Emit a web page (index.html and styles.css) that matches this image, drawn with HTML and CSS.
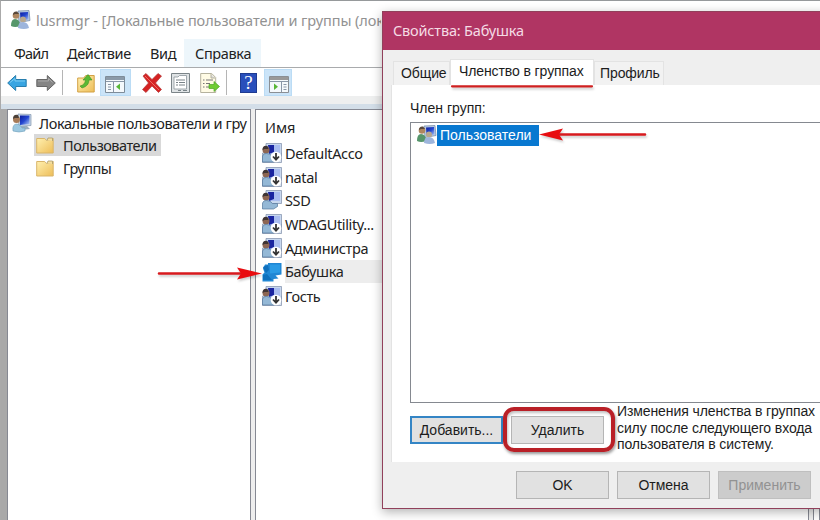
FILE: index.html
```html
<!DOCTYPE html>
<html lang="ru">
<head>
    <meta charset="UTF-8">
    <title>lusrmgr</title>
    <link rel="stylesheet" href="styles.css">
</head>
<body>
    <!-- shared icons -->
    <svg class="defs" width="0" height="0">
        <defs>
            <linearGradient id="gold" x1="0" y1="0" x2="1" y2="1"><stop offset="0" stop-color="#fff0b0"/><stop offset="1" stop-color="#edbd58"/></linearGradient>
            <linearGradient id="screen" x1="0" y1="0" x2="1" y2="1"><stop offset="0" stop-color="#0c1c9c"/><stop offset=".5" stop-color="#2447d0"/><stop offset="1" stop-color="#b8d0f5"/></linearGradient>
        </defs>
        <symbol id="pc" viewBox="0 0 20 20">
            <path d="M6 1l13 0.500v11l-12 1z" fill="#c5d5e8" stroke="#8295ad" stroke-width=".7"/>
            <path d="M8 2.500l9.500 0v8.500l-9.500 1z" fill="url(#screen)"/>
            <path d="M9 13h6l3 3-8 1z" fill="#9baebd"/>
            <circle cx="4.500" cy="6.500" r="3.500" fill="#a77b58"/>
            <path d="M1 6q0-5 5-4l1 3-4 0z" fill="#4b4038"/>
            <path d="M1 18q-1-7 4-7 3 0 5 4l3 0v3q-6 2-12 0z" fill="#9cc8e0" stroke="#6f9fba" stroke-width=".6"/>
        </symbol>
        <symbol id="group" viewBox="0 0 20 20">
            <path d="M7 1l11-.5 1 10-11 2z" fill="#b9cbe4" stroke="#7086a5" stroke-width=".7"/>
            <path d="M9 2.500l8-.5.5 7.500-8 1z" fill="url(#screen)"/>
            <circle cx="5" cy="5.500" r="3.300" fill="#ae865f"/>
            <path d="M2 5q0-4 4-3.500l2 2.500-4 0z" fill="#58483b"/>
            <path d="M0 16q0-7 4-7 5 0 5 7-5 2-9 0z" fill="#56966b"/>
            <circle cx="12" cy="9.500" r="3" fill="#b8a88e"/>
            <path d="M7 18q0-6 5-6 5 0 6 6-5 2-11 0z" fill="#9db5dc"/>
        </symbol>
        <symbol id="user" viewBox="0 0 20 20">
            <path d="M4 .5h15.500v13h-15.500z" fill="#c8d8ef" stroke="#7d8da8" stroke-width=".7"/>
            <path d="M7 2h11v9h-11z" fill="#a9bdf0"/>
            <path d="M6 2h6v7l-5 2z" fill="#1a25a0"/>
            <circle cx="4" cy="7" r="3.500" fill="#8d6653"/>
            <path d="M.5 7q0-5 5-4l1 3-4 0z" fill="#3f3535"/>
            <path d="M.5 19v-6q1-3 4-2.500 4 0 6 3h5v3l-4 2.500z" fill="#94b8d6" stroke="#53779c" stroke-width=".7"/>
        </symbol>
        <symbol id="off" viewBox="0 0 20 20">
            <path d="M.5 10h19v9.500h-19z" fill="#dce5f2" stroke="#7d8da8" stroke-width=".7"/>
            <use href="#user"/>
            <circle cx="14" cy="14" r="5.300" fill="#fff"/>
            <path d="M14 10v7M11 13.500l3 3.200 3-3.200" fill="none" stroke="#333" stroke-width="1.800"/>
        </symbol>
        <symbol id="picked" viewBox="0 0 20 20">
            <path d="M6 1h13.500v11.500l-6 1 3 3-5 .5v2.500h-11v-7l2-2-1.500-4 2-4h3z" fill="#2187d4"/>
            <path d="M8 2.500h10v8l-10 1z" fill="#2b9be5"/>
            <path d="M1 5l5-2 1 5-3 3zM1 18v-5l4-1 5 6z" fill="#0f70bd"/>
        </symbol>
        <symbol id="folder" viewBox="0 0 18 17">
            <path d="M.7 1.500h8l2 2h5l1.500-2v14.500h-16.500z" fill="url(#gold)" stroke="#d9b56a"/>
            <path d="M11 3.500l1-2.500h4.500v3" fill="#f5dfa0" stroke="#a99a6a" stroke-width=".8"/>
        </symbol>
    </svg>

    <div class="window">
        <header class="titlebar">
            <svg width="20" height="20"><use href="#group"/></svg>
            <span class="caption">lusrmgr - [Локальные пользователи и группы (лок</span>
        </header>
        <nav class="menu">
            <span class="file">Файл</span><span class="action">Действие</span><span class="view">Вид</span><span class="help">Справка</span>
        </nav>
        <div class="toolbar">
            <svg class="tool" width="20" height="18" viewBox="0 0 20 18"><path d="M.7 9l8-7.500v4h10.500v7h-10.500v4z" fill="#38a5e2" stroke="#287eae"/><path d="M3 8.500l5-4v2.500h10" fill="none" stroke="#7ccdf2"/></svg>
            <svg class="tool forward" width="20" height="18" viewBox="0 0 20 18"><path d="M19.300 9l-8-7.500v4h-10.500v7h10.500v4z" fill="#858585" stroke="#676767"/><path d="M2 7h10.500v-2.500l4 4" fill="none" stroke="#aaa"/></svg>
            <i class="sep"></i>
            <svg class="tool up" width="18" height="20" viewBox="0 0 18 20"><path d="M.7 5h6l2-2.500h8.500v16.500h-16.500z" fill="url(#gold)" stroke="#d3a145"/><path d="M3 13q5-1 5.500-6l-2.500 0 5-5.500 4 5.500h-3q0 6-7 8z" fill="#5bb933" stroke="#3c9226" stroke-width=".6"/></svg>
            <span class="pressed tree-toggle"><svg width="20" height="17" viewBox="0 0 20 17"><path d="M.5 .5h19v16h-19z" fill="#f5f9fc" stroke="#7e8c99"/><path d="M1 1h18v3h-18z" fill="#8b9aa9"/><path d="M1 5.500h18M8.500 5v11M3 8.500h3M3 11h3M3 13.500h3" fill="none" stroke="#8997a8"/><path d="M15 7.500v6.500l-4-3.200z" fill="#58b738"/></svg></span>
            <svg class="tool delete" width="20" height="20" viewBox="0 0 20 20"><path d="M1 3l3-2.500 6 6 6-6 3.500 2.500-6 7 6 6.500-3 3-6.500-6.500-6 6.500-3.500-3 6-6.500z" fill="#d52222" stroke="#b23a3a" stroke-width=".7"/><path d="M3 3l14 14" stroke="#ef6b61"/></svg>
            <svg class="tool props" width="19" height="20" viewBox="0 0 19 20"><path d="M.5 .5h18v19h-18z" fill="#dfe3e5" stroke="#7b8488"/><path d="M3 4h4l1.500-1.500h7v13.500h-12.500z" fill="#fff" stroke="#8a949a" stroke-width=".8"/><path d="M5 7h9M5 9.500h2M8 9.500h6M5 12h2M8 12h6M7 17.500h3M12 17.500h4" stroke="#788287"/></svg>
            <svg class="tool export" width="20" height="20" viewBox="0 0 20 20"><path d="M.7 .5h11l4 4v15h-15z" fill="#fffbe5" stroke="#b5b29e"/><path d="M11 1v4h4" fill="#ddd" stroke="#b5b29e"/><path d="M3 7h1.500M6 7h7M3 10.500h1.500M6 10.500h4M3 14h1.500M6 14h4" stroke="#777"/><path d="M9 11.500h5v-3l5.500 5-5.500 5v-3h-5z" fill="#70cc33" stroke="#4ca625" stroke-width=".7"/></svg>
            <i class="sep second"></i>
            <span class="question">?</span>
            <span class="pressed action-toggle"><svg width="20" height="17" viewBox="0 0 20 17"><path d="M.5 .5h19v16h-19z" fill="#f5f9fc" stroke="#8a8f94"/><path d="M1 1h18v3h-18z" fill="#999"/><path d="M1 5.500h18M12.500 5v11M14.500 8.500h3M14.500 11h3M14.500 13.500h3" fill="none" stroke="#8997a8"/><path d="M5 7.500v6.500l4-3.200z" fill="#58b738"/></svg></span>
        </div>
        <div class="rebar"></div>
        <main class="panes">
            <section class="tree">
                <div class="root"><svg width="20" height="20"><use href="#pc"/></svg><span>Локальные пользователи и гру</span></div>
                <div class="node selected"><svg width="18" height="17"><use href="#folder"/></svg><span>Пользователи</span></div>
                <div class="node"><svg width="18" height="17"><use href="#folder"/></svg><span>Группы</span></div>
            </section>
            <section class="list">
                <div class="column">Имя</div>
                <div class="user"><svg width="20" height="20"><use href="#off"/></svg><span>DefaultAcco</span></div>
                <div class="user"><svg width="20" height="20"><use href="#off"/></svg><span>natal</span></div>
                <div class="user"><svg width="20" height="20"><use href="#user"/></svg><span>SSD</span></div>
                <div class="user"><svg width="20" height="20"><use href="#off"/></svg><span>WDAGUtility...</span></div>
                <div class="user"><svg width="20" height="20"><use href="#off"/></svg><span>Администра</span></div>
                <div class="user current"><svg width="20" height="20"><use href="#picked"/></svg><span>Бабушка</span></div>
                <div class="user"><svg width="20" height="20"><use href="#off"/></svg><span>Гость</span></div>
            </section>
            <section class="actions"></section>
        </main>
    </div>

    <div class="dialog">
        <div class="dialog-title"><span>Свойства: Бабушка</span></div>
        <div class="tabs">
            <span class="tab general">Общие</span><span class="tab active">Членство в группах</span><span class="tab profile">Профиль</span>
        </div>
        <div class="page">
            <label>Член групп:</label>
            <div class="members">
                <svg width="20" height="20"><use href="#group"/></svg><span>Пользователи</span>
            </div>
            <div class="edit">
                <button class="add">Добавить...</button>
                <button class="remove">Удалить</button>
                <p>Изменения членства в группах<br>силу после следующего входа<br>пользователя в систему.</p>
            </div>
        </div>
        <div class="footer">
            <button class="ok">OK</button>
            <button class="cancel">Отмена</button>
            <button class="apply" disabled>Применить</button>
        </div>
    </div>

    <!-- red marks -->
    <svg class="marks" width="820" height="520">
        <path d="M159 273.500h84M556 134.500h89" stroke="#d81a1e" stroke-width="2.600" stroke-linecap="round"/>
        <path d="M262 273.500l-25-6 4 6-4 6z" fill="#e80c10"/>
        <path d="M539 134.500l24-6-4 6 4 6z" fill="#e80c10"/>
        <path d="M452 86.300h140" stroke="#d02020" stroke-width="2.200" stroke-linecap="round"/>
    </svg>
    <div class="ring"></div>
</body>
</html>
```
FILE: styles.css
```css
* {
    box-sizing: border-box;
}
body {
    margin: 0;
    width: 820px;
    height: 520px;
    overflow: hidden;
    position: relative;
    background: #fff;
    color: #222;
    font: 14.5px "Noto Sans", sans-serif;
    white-space: nowrap;
}
svg {
    display: block;
    flex: none;
}
.defs {
    position: absolute;
}
.window {
    height: 520px;
    display: flex;
    flex-direction: column;
    border-top: 1px solid #96999b;
    border-left: 1px solid #aaa;
}
.titlebar {
    height: 38px;
    display: flex;
    align-items: center;
    padding-left: 10px;
    gap: 5px;
    color: #929292;
}
.caption {
    width: 345px;
    overflow: hidden;
    letter-spacing: -0.07px;
}
.menu {
    height: 29px;
    display: flex;
    border-bottom: 1px solid #a9abad;
    line-height: 29px;
    padding-left: 13px;
    letter-spacing: -0.35px;
}
.menu .file {
    width: 53px;
    letter-spacing: -0.8px;
}
.menu .action {
    width: 83px;
}
.menu .view {
    width: 34px;
}
.menu .help {
    background: #edf6fb;
    width: 77px;
    padding-left: 11px;
}
.toolbar {
    height: 28px;
    display: flex;
    align-items: center;
    padding-left: 6px;
}
.tool {
    margin-top: 2px;
}
.forward {
    margin-left: 9px;
}
.sep {
    width: 1px;
    height: 25px;
    background: #b5b5b5;
    margin-left: 6px;
}
.up {
    margin-left: 14px;
}
.pressed {
    height: 27px;
    background: #cbe4f8;
    border: 1px solid #bbdcf5;
    padding: 6px 4px 0 4px;
}
.tree-toggle {
    width: 31px;
    margin-left: 5px;
}
.delete {
    margin-left: 11px;
}
.props {
    margin-left: 9px;
}
.export {
    margin-left: 10px;
}
.second {
    margin-left: 6px;
}
.question {
    width: 17px;
    height: 20px;
    margin: 2px 0 0 13px;
    background: #294fbb;
    border: 1px solid #1f3b91;
    color: #fff;
    font: 19px/18px "Liberation Serif", serif;
    text-align: center;
}
.action-toggle {
    width: 28px;
    margin-left: 7px;
}
.rebar {
    height: 13px;
    background: #eeefef;
    border-bottom: 5px solid #d3dee8;
    flex: none;
}
.panes {
    flex: 1;
    display: flex;
    gap: 4px;
    background: #eee;
    border-left: 6px solid #a9a9a9;
}
.panes section {
    background: #fff;
    border: 1px solid #868993;
    border-bottom: 0;
}
.tree {
    width: 244px;
}
.root {
    display: flex;
    align-items: center;
    padding: 1px 0 0 4px;
    gap: 7px;
    height: 24px;
    letter-spacing: -0.4px;
}
.node {
    display: flex;
    align-items: center;
    gap: 9px;
    width: 127px;
    height: 22px;
    margin-left: 26px;
    padding-left: 2px;
    letter-spacing: -0.5px;
}
.node + .node {
    margin-top: 1px;
}
.selected {
    background: #d9d9d9;
}
.list {
    width: 554px;
}
.column {
    height: 31px;
    padding-left: 9px;
    line-height: 35px;
}
.user {
    display: flex;
    align-items: center;
    gap: 3px;
    height: 23.8px;
    padding-left: 6px;
    letter-spacing: -0.38px;
}
.current span {
    background: #ededed;
    height: 23px;
    line-height: 23px;
    flex: 1;
}
.actions {
    flex: 1;
}
.dialog {
    position: absolute;
    left: 382px;
    top: 11px;
    width: 446px;
    height: 498px;
    border: 1px solid #91405b;
    background: #efefef;
    box-shadow: 0 3px 10px rgba(0, 0, 0, .3);
    color: #1c1c1c;
    font: 14px "Liberation Sans", Arial, sans-serif;
}
.dialog-title {
    height: 38px;
    background: #b03563;
    color: #f5dce5;
    padding-left: 10px;
    font: 14.5px/37px "Noto Sans", sans-serif;
    letter-spacing: -0.18px;
}
.tabs {
    height: 35px;
    display: flex;
    align-items: flex-end;
    padding-left: 10px;
    letter-spacing: -0.1px;
}
.tab {
    height: 24px;
    line-height: 23px;
    border: 1px solid #e3e3e3;
    border-bottom: 0;
    background: #f2f2f2;
}
.general {
    width: 57px;
    padding-left: 7px;
}
.active {
    width: 144px;
    height: 26px;
    padding-left: 8px;
    background: #fff;
}
.profile {
    width: 70px;
    padding-left: 5px;
}
.page {
    height: 377px;
    margin-left: 8px;
    padding: 14px 0 0 18px;
    background: #fff;
    border-left: 1px solid #e3e3e3;
}
.page label {
    display: block;
    height: 23px;
    line-height: 18px;
}
.members {
    height: 281px;
    border: 1px solid #858990;
    display: flex;
    align-items: flex-start;
    padding: 2px 0 0 6px;
}
.members span {
    width: 102px;
    height: 21px;
    padding-left: 3px;
    background: #0878d0;
    color: #fff;
    line-height: 21px;
}
.edit {
    display: flex;
    padding-top: 13px;
}
button {
    flex: none;
    width: 93px;
    height: 28px;
    padding: 0;
    background: #e1e1e1;
    border: 1px solid #b5b5b5;
    color: #1c1c1c;
    font: inherit;
}
.add {
    border: 2px solid #3485c5;
}
.remove {
    margin-left: 8px;
}
.edit p {
    margin: -13px 0 0 13px;
    line-height: 16.5px;
    letter-spacing: -0.1px;
}
.footer {
    display: flex;
    gap: 8px;
    padding: 9px 0 0 133px;
}
.apply {
    background: #ccc;
    border-color: #bfbfbf;
    color: #929292;
}
.marks {
    position: absolute;
    left: 0;
    top: 0;
    filter: drop-shadow(1px 2px 1px rgba(0, 0, 0, .2));
}
.ring {
    position: absolute;
    left: 503px;
    top: 407px;
    width: 112px;
    height: 45px;
    border: 4px solid #b92027;
    border-radius: 11px;
    box-shadow: 1px 2px 3px rgba(0, 0, 0, .4), inset 1px 2px 3px rgba(0, 0, 0, .25);
}
```
